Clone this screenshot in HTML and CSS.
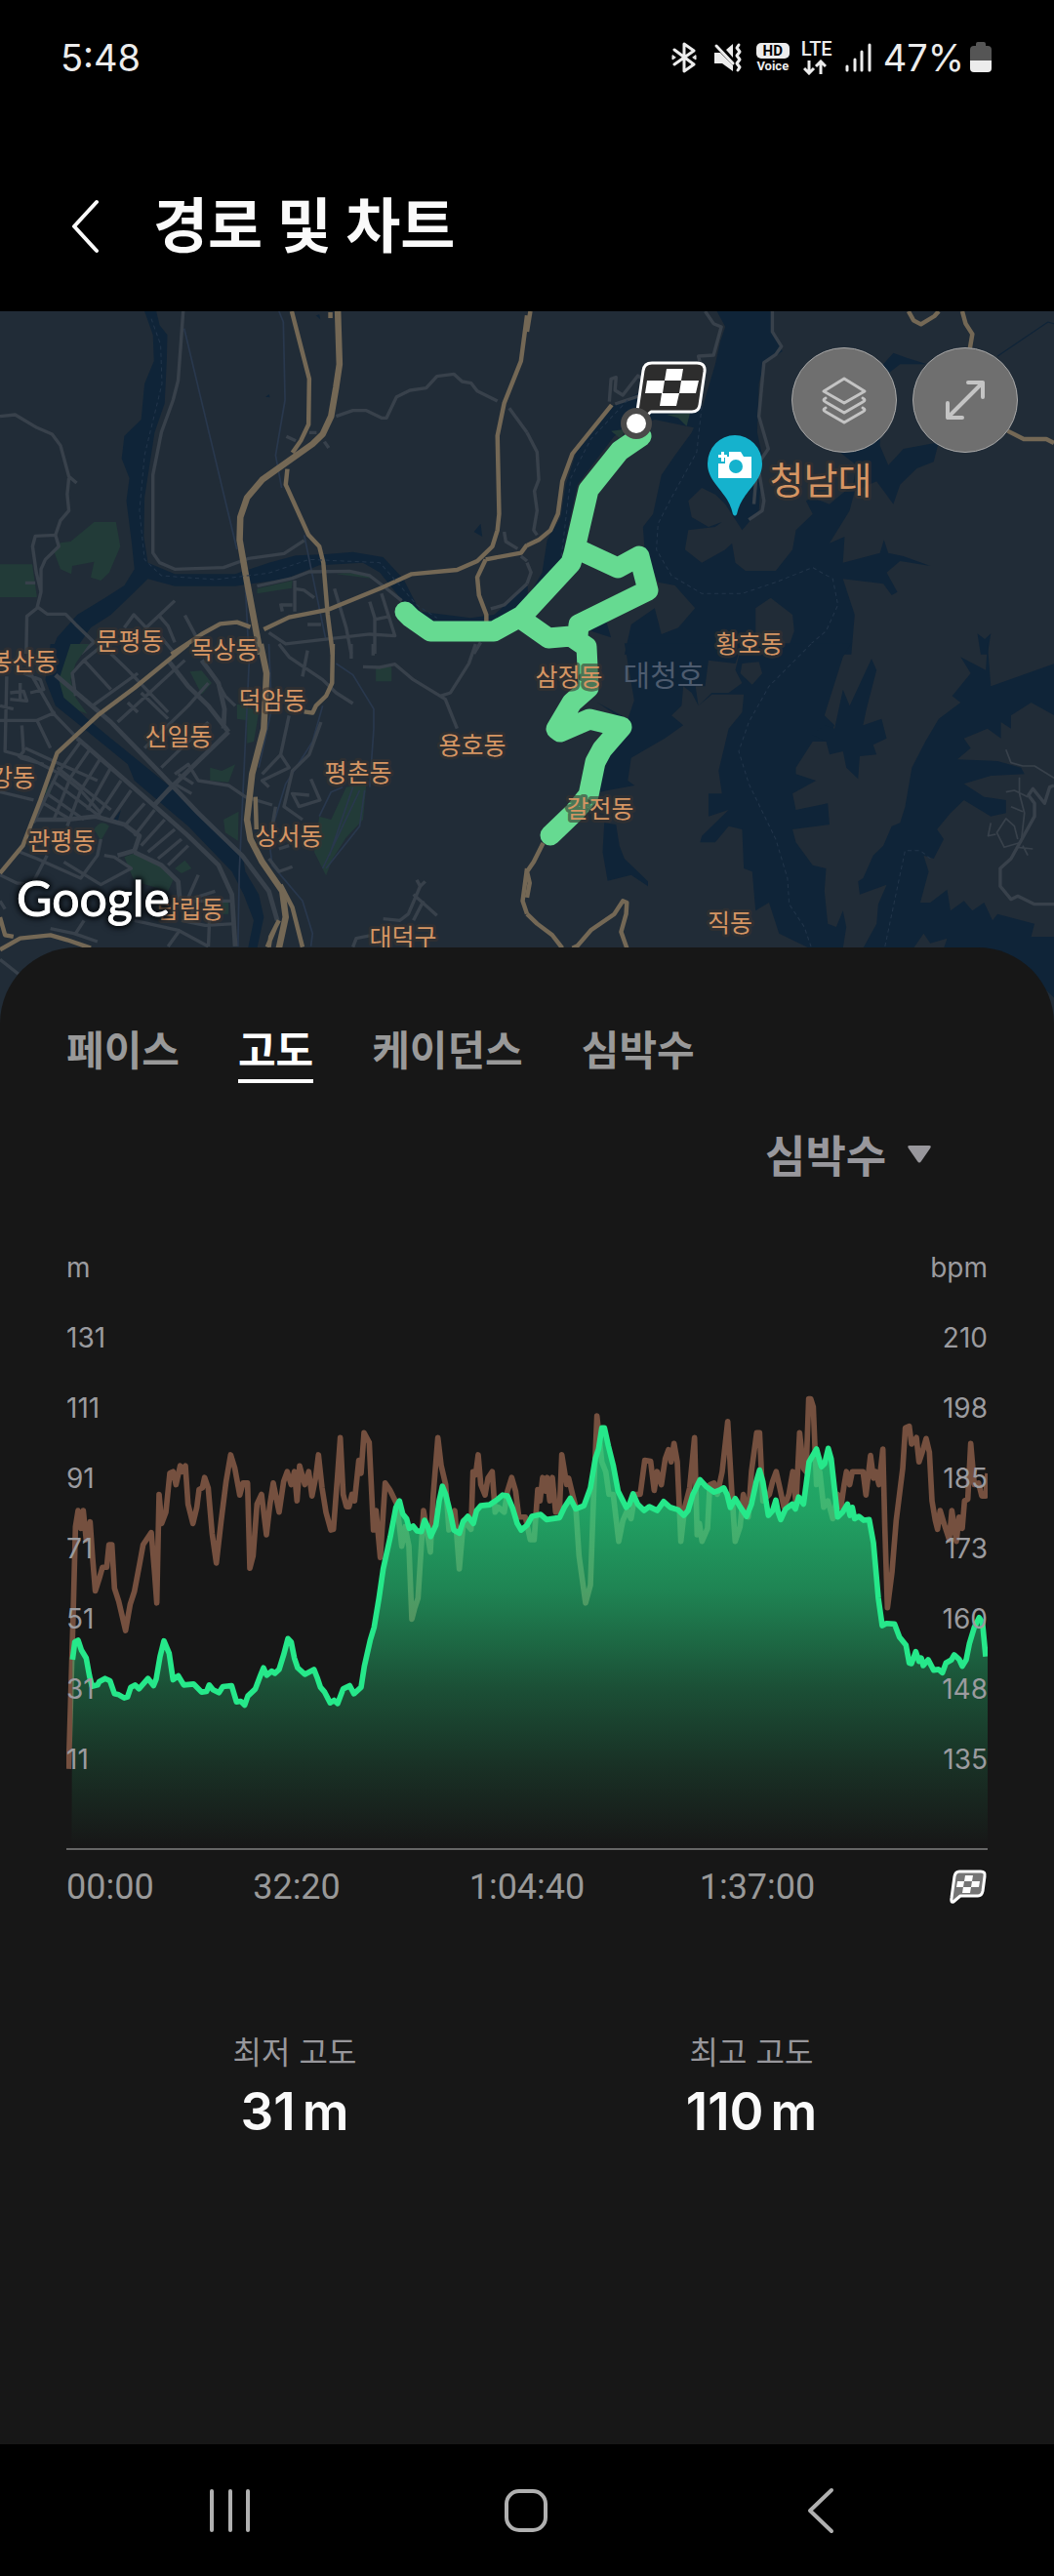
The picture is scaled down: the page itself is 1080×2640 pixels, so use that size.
FILE: index.html
```html
<!doctype html>
<html lang="ko">

<head>
	<meta charset="utf-8">
	<meta name="viewport" content="width=device-width">
	<title>경로 및 차트</title>
	<link rel="stylesheet" href="styles.css">
</head>

<body>
	<div class="status">
		<span class="clock">5:48</span>
		<div class="status-icons">
			<!-- bluetooth -->
			<svg width="28" height="32" viewBox="0 0 28 32" fill="none" stroke="#ececec" stroke-width="3" stroke-linejoin="round" stroke-linecap="round">
				<path d="M4 8l20 15-10 7V2l10 7L4 23" />
				<path d="M2 14v4l3-2zM26 14v4l-3-2z" stroke-width="1" fill="#ececec" />
			</svg>
			<!-- mute + vibrate -->
			<svg width="30" height="32" viewBox="0 0 30 32">
				<path d="M1 11h6l13 13v6L9 22H1zM20 2v14l-7-8z" fill="#ececec" />
				<path d="M3 4l17 18M26 3l-2 3 3 4-3 4 3 4-3 4 3 4-2 3" fill="none" stroke="#ececec" stroke-width="3" stroke-linecap="round" stroke-linejoin="round" />
			</svg>
			<span class="volte"><b>HD</b><i>Voice</i></span>
			<span class="lte">LTE
				<svg width="24" height="16" viewBox="0 0 24 16" fill="none" stroke="#ececec" stroke-width="3">
					<path d="M6 1v13M1 9l5 5 5-5M18 15V2M13 7l5-5 5 5" />
				</svg>
			</span>
			<svg width="28" height="32" viewBox="0 0 28 32" stroke="#ececec" stroke-width="3" stroke-linecap="round">
				<path d="M3 25v4M11 18v11M18 10v19M26 3v26" />
			</svg>
			<span class="battery-text">47%</span>
			<svg width="22" height="32" viewBox="0 0 22 32">
				<path d="M6 4V2q0-2 2-2h6q2 0 2 2v2h2q4 0 4 4v11H0V8q0-4 4-4z" fill="#555" />
				<path d="M0 19h22v8q0 4-4 4H4q-4 0-4-4z" fill="#ececec" />
			</svg>
		</div>
	</div>

	<header class="header">
		<button class="back" aria-label="뒤로">
			<svg width="52" height="60" viewBox="0 0 52 60" fill="none" stroke="#fafafa" stroke-width="4" stroke-linecap="round" stroke-linejoin="round">
				<path d="M38 5L15 30l23 25" />
			</svg>
		</button>
		<h1>경로 및 차트</h1>
	</header>

	<section class="map">
		<svg class="map-canvas" viewBox="0 319 1080 731" preserveAspectRatio="xMidYMin slice">
			<rect y="319" width="1080" height="731" fill="#212c37" />

			<!-- north west tile -->
			<g transform="translate(0 310) scale(.3444 .3333)">
				<path class="water" d="M430 27L465 27 475 70 498 100 496 180 490 310 460 400 448 480 430 600 428 720 440 800 520 835 700 835 800 800 880 778 960 775 1050 767 1140 783 1200 850 1250 950 1400 970 1470 960 1570 870 1570 1000 1280 990 1200 920 1130 830 1080 800 950 808 850 850 700 872 520 872 440 850 400 890 330 960 270 1000 215 1082 150 1082 170 1030 230 960 310 910 370 870 400 820 392 740 376 610 385 540 362 480 370 410 420 360 430 250 458 180 455 100ZM1410 705l20-25 5 40zM940 40l10-3 3 15zM790 290l10-8 3 10z" />
				<path class="park" d="M0 805H96L110 906H0ZM170 740L210 735 280 675H345L358 750 325 830 300 855 270 845 280 797 215 810 212 835 180 820 162 770ZM765 880L870 855 868 878 765 895ZM1000 835q70-10 115 15z" />
				<path class="rail" d="M548 80L705 760M830 27L843 60 848 300 820 470 838 570M905 715L970 1040M730 870L740 1080" />
				<path class="road" d="M0 350L45 345 110 385 155 405 180 440 205 535 228 555M205 540L200 590 205 640 180 670 165 715 105 718 97 750 108 830 122 890 110 940 80 965 78 1080M165 715L175 750 135 790 122 820 122 890M110 935L140 958H195L225 990 280 1045 240 1080M75 862H105" />
				<path class="road" d="M545 27L540 100 530 240 515 300 480 400 455 530V770L475 800 520 820 665 815 740 787 845 772 905 732M1000 350L1050 332H1090L1135 355H1150L1180 290 1220 270 1268 263 1300 227 1350 220 1375 243 1402 248 1420 272 1480 303M1515 325L1568 400M765 872L870 848 920 828 1040 826 1100 840 1150 880 1195 917M877 855V950M877 880L905 885 935 908M835 930H870M840 950L835 925" />
				<path class="road" d="M370 1000L398 960 435 1000 520 917M475 965L500 995 520 1045M550 962L590 1040M995 880L1030 1000 1045 1080M1135 895L1175 1025 1100 1020 850 1050 800 1015M1100 920L1115 970V1080M915 990H955M1115 975L1160 965M520 1080L480 1030M1500 705L1505 735 1540 757M1568 795L1550 780M1568 865L1500 930 1460 942M852 412L880 425M920 400H942M965 428L978 447M1410 1080L1430 1045" />
				<path class="highway wide" d="M1005 27L1010 190 1000 260 985 350 960 405 930 435 780 545 735 600 715 660 713 730 735 860 775 1082" />
				<path class="highway" d="M868 27L920 235 918 375 895 425 870 462M855 512L850 560 918 715 950 750 962 800 975 960 990 1082M1568 40L1550 180 1500 310 1480 410 1485 650 1480 700 1465 750 1420 795 1360 822 1225 835 1140 875 975 945 860 968 785 1005M745 998L705 983 655 988 600 1020 510 1082M1445 790L1420 845 1425 900 1447 960V985M1445 790L1550 770 1568 745M983 30v18" />
				<path class="ferry" d="M450 50L478 130 482 250 430 470 415 640 430 790 480 840 640 852 800 832 920 790 1020 795 1130 800 1240 930 1300 970" />
			</g>

			<!-- north east tile -->
			<g transform="translate(540 310) scale(.3444 .3333)">
				<path class="water" d="M565 27L590 75 575 120 560 190 520 330 490 400 440 470 400 530 375 650 345 690 350 760 390 860 440 870 500 940 450 1000 400 1020 380 940 310 990 290 1082 965 1082 975 960 940 850 1060 865 1085 900 1102 890 1070 830 1110 795 1200 810 1120 780 1075 770 1062 730 1050 770 940 800 945 720 900 740 960 640 975 580 1040 550 1090 620 1110 560 1160 510 1210 490 1225 430 1120 450 1075 500 1050 440 1060 230 1110 190 1190 190 1130 170 1090 155 1060 190 1040 300 1030 430 930 460 980 500 970 560 900 620 850 600 830 610 850 650 800 700 790 760 740 825 650 825 620 800 610 740 590 760 520 800 470 760 480 700 560 690 580 675 540 690 490 660 480 610 520 570 560 590 590 620 640 700 690 640 700 470 685 400 690 250 705 190 760 150 735 100 725 27ZM330 280L250 320 150 450 115 560 100 660 60 730 45 830 0 910V970L100 800 150 560 260 410 380 360 520 390V290ZM230 960L250 1030 190 1010zM1340 1018L1362 1035 1380 1018 1370 1082H1350Z" />
				<path d="M680 940L725 908 790 960 795 1010 770 1082H680Z" fill="#212c37" />
				<path class="park" d="M415 345L485 340 475 380 450 355ZM250 395L290 390 280 420Z" />
				<path class="road" d="M530 27L555 65 578 75 555 162 510 165 515 185M730 27V90L757 135 740 160 705 185 690 350 718 450 685 500 675 620M690 520L705 610 700 640 660 668M245 305L250 235 265 230 262 270 285 285 330 225 350 240M262 312L370 275M0 400L30 460 35 545 22 580 30 640 20 700 30 715M0 800L12 830 0 865" />
				<path class="highway" d="M252 315L135 465 105 550 92 650 70 700 35 730 0 747M1135 27L1150 55 1172 67 1212 42 1225 27M1295 27L1305 65 1325 97 1318 140M1430 395L1478 420H1545L1568 432M0 90L10 27" />
				<path class="ferry" d="M520 320L505 460 430 600 390 680 385 760 430 840 520 895 640 895 740 860 850 815 910 850 925 930 890 1010 810 1080M300 300L190 420 130 540 100 800" />
				<path class="stream" d="M1400 165L1550 60 1568 65" />
			</g>

			<!-- south west tile -->
			<g transform="translate(0 660) scale(.3444 .3333)">
				<path class="water" d="M150 0H215L180 100 200 170 260 230 330 290 520 450 640 560 720 640 730 700 770 770 785 840 765 935H738L755 850 725 770 690 700 560 560 400 420 380 370 250 260 165 190 135 110ZM335 545L360 510 350 545z" />
				<path class="park" d="M210 0H265L225 60 210 110 225 165 260 215 235 205 190 165 175 110ZM565 85L600 82 630 120 600 155ZM1118 70H1165V115H1118ZM705 185L730 190 770 210 755 300 735 305 735 235 705 230ZM625 380L660 390 700 370 680 425 625 420ZM665 540L710 515 708 605 670 580ZM370 655L410 640 480 680 520 715 500 760 400 730ZM520 690L550 665 570 690 540 705ZM280 570Q300 535 325 560L300 605ZM660 785H680V830H660ZM1030 440L1090 430 1080 540 1030 595 990 660 970 712 935 640 950 530 985 540ZM130 460L160 415 150 460Z" />
				<path class="rail" d="M742 40L730 300 712 700 708 930M800 0L808 200 770 380M960 190L930 300 850 430 800 600 810 680 900 790 930 890 925 930M1000 60L1050 95 1112 200V260L1100 440M1070 450L960 690M1085 450L1070 560 970 690M1050 440L980 650M1020 440L985 455 950 530" />
				<path class="road wide" d="M165 95L330 240 480 400 590 520 720 650 800 760 825 850M230 290L330 380 440 480 560 590 650 680 690 770 700 930M680 270L500 450 455 500M500 50L560 130 620 190 680 270M600 50L650 120 668 200 665 260M100 540H200L285 530 370 555 415 590 400 635 350 650M400 640L480 680 530 730 535 790" />
				<path class="road" d="M20 100L15 330 85 350 180 400 240 450 300 520M0 235H110L165 210M70 90L120 110 130 140 90 150M30 150L70 145 80 175 30 170M60 120V175M65 250L70 330 55 350M110 235L150 320M0 190L40 200M85 80L160 215 230 290M75 320L180 370 290 420M60 350L130 370M250 50L330 140M330 30L380 80 500 210M225 160L215 90 250 50 310 0M275 190L410 90M350 240L550 50M380 180L410 210M420 150L500 230M430 320L560 190 620 120M480 380L620 240M520 400L560 370 590 420 680 435 730 470 810 495" />
				<path class="road" d="M520 430L570 460M530 400L575 430M240 300L170 400 100 550M270 320L210 410 160 540M300 350L240 450 200 560M330 380L260 510M360 420L290 530M390 450L330 540M430 490L370 560M460 510L400 590M490 540L420 620M520 570L440 640M540 600L470 660M560 620L500 680M170 380L330 510M155 420L310 540M140 460L250 540M130 490L210 540M300 600L290 650 240 720 110 660 60 640M140 650L100 730M190 670L300 740 390 690 340 655 310 650M530 790H690M540 850L610 865 700 860M575 790L570 850M625 800L620 930M535 880L500 930M590 710L560 780M640 760L580 780M400 850L530 880 620 930M150 875L220 890 290 915M250 850L225 890M0 710L50 735 100 740M0 790L15 815M0 455L100 480M0 970L55 1015" />
				<path class="road" d="M640 105L670 160 700 190M830 0L860 40 960 110 1000 150 1050 183M915 20L900 100M1045 0V45M1110 0V35M1080 70L1130 72 1175 62 1230 110 1310 160 1325 170 1360 260M1310 160L1340 150 1395 60 1415 0M955 240L920 340 870 390 845 500 900 540M860 220L835 340 780 400M835 340L860 380 780 420 800 440M925 415L952 480 890 500 870 460 920 465M820 500L810 560M830 630L860 620M800 660L830 700 870 685M1240 725L1250 745 1265 730M1250 745L1215 830 1190 850 1140 845M1230 770L1300 835M1260 790L1230 850M1100 897L1060 905 1050 932" />
				<path class="highway wide" d="M775 0L793 90 785 260 750 400 735 540 745 600 780 670 840 760 850 840 830 935" />
				<path class="highway" d="M560 0L515 38 400 135 290 220 170 335 120 480 90 560 68 620 0 705M990 0L988 120 970 160 940 190 930 212 905 208M760 470L763 570M835 740L870 810 900 932M830 850L805 900 800 932M820 870L795 932M0 840L15 895 40 900M0 940L60 905 150 895 200 910 270 935M1568 690L1555 790 1568 830" />
			</g>

			<!-- south east tile -->
			<g transform="translate(540 660) scale(.3444 .3333)">
				<path class="water" d="M210 180L300 230 320 170 330 100 380 60 500 20 530 80 500 120 510 190 550 150 600 150 640 120 620 80 640 -2 965 -2 940 40 885 220 915 250 890 300 850 300 800 380 800 400 860 420 790 460 800 510 895 490 900 555 790 570 800 610 850 680 890 690 885 760 895 860 920 870 940 820 950 870 940 935 840 935 750 890 720 795 680 820 670 700 645 690 640 570 600 560 560 610 515 610 520 590 600 510 540 530 540 460 580 460 570 390 600 260 640 210 645 155 550 155 510 190 490 150 465 130 460 190 430 220 465 250 410 290 310 350 300 420 320 435 240 450 200 460 250 330 310 250ZM290 -2H640L620 60 540 50 530 130 465 130 430 200 320 180ZM230 550L265 555 275 620 290 660 360 730V745L310 710 240 728 225 640Z" />
				<path class="water" d="M1025 45L1040 80 1010 200 1000 250 1055 230 1070 290 1030 310 1040 340 990 345 985 415 950 380 940 330 900 340 890 300 850 280 885 250 915 260 940 140 960 190Z" />
				<path class="water" d="M1370 -2L1365 80 1290 40 1320 90 1265 160 1290 180 1225 230 1185 300 1145 380 1125 500 1110 550 1085 560 1060 620 1030 650 1000 720 985 730 990 770 1070 740 1045 800 1040 860 1000 935 1150 935 1180 890 1200 920 1250 905 1240 935 1360 935 1440 980 1500 1020 1570 1090V900L1500 900 1510 860 1400 830 1385 850 1360 795 1325 820 1300 790 1260 820 1250 755 1200 795 1170 795 1195 700 1180 650 1210 660 1240 600 1220 570 1260 520 1300 480 1380 530 1425 520V480L1360 470 1300 430 1380 405 1480 400 1470 380 1400 360 1280 355 1320 320 1300 290 1370 260 1410 290V240L1440 260V220L1500 180 1570 220V60L1380 130Z" />
				<path d="M640 60L690 55 700 90 670 125 635 90Z" fill="#212c37" />
				<path class="road" d="M1568 435L1555 440 1540 490 1505 445 1492 465 1510 490V530L1440 660 1408 690V745L1440 785 1460 775 1510 800H1568" />
				<path class="road thin" d="M1425 325L1440 365 1475 375H1510L1568 412M1465 410V460L1480 520 1470 610 1420 625 1398 580 1425 537 1450 560 1460 600M1425 455L1450 450 1490 470M1440 500L1475 515M1380 550L1372 590 1395 585M1460 625L1505 630M1475 620L1490 650" />
				<path class="highway" d="M48 612L20 670 0 700 8 735 0 780M0 830L30 860 75 895 105 935M135 935L150 928 190 880 260 830 285 790 297 795 295 830 280 885 297 935" />
				<path class="ferry" d="M845 0L720 130 660 240 630 330 660 430 740 600 775 720 780 800 825 870 845 930M1065 930L1125 635 1170 635 1200 660" />
			</g>

			<!-- recorded route -->
			<path class="route" d="M654 443L657 447 635 462 603 502 588 567 585 577 535 631 506 647H441L421 633 415 627M535 635L562 654 585 652 601 663 603 705 586 720 570 747 574 750 604 737 637 745 617 768 610 781 603 815 589 832 564 856M590 562L633 582 655 570 664 605 593 640 592 652" />

			<g class="places">
				<text x="24" y="687">봉산동</text>
				<text x="133" y="666">문평동</text>
				<text x="230" y="675">목상동</text>
				<text x="279" y="727">덕암동</text>
				<text x="183" y="764">신일동</text>
				<text x="484" y="773">용호동</text>
				<text x="13" y="806">강동</text>
				<text x="367" y="801">평촌동</text>
				<text x="63" y="871">관평동</text>
				<text x="296" y="866">상서동</text>
				<text x="195" y="941">탑립동</text>
				<text x="413" y="970">대덕구</text>
				<text x="768" y="669">황호동</text>
				<text x="583" y="703">삼정동</text>
				<text x="615" y="838">갈전동</text>
				<text x="748" y="955">직동</text>
				<text class="lake" x="680" y="703">대청호</text>
				<text class="sight" x="841" y="506">청남대</text>
			</g>

			<!-- photo spot pin -->
			<path d="M753 446a28 29 0 0 1 28 29c0 21-21 28-26 52q-2 3-4 0c-5-24-26-31-26-52a28 29 0 0 1 28-29z" fill="#15b2cd" />
			<path d="M747 463h12l3 5h8v22h-34v-15h7v-7h4zM739 463h3v3h3v3h-3v4h-3v-4h-3v-3h3z" fill="#fff" />
			<circle cx="754" cy="478" r="7" fill="#15b2cd" />

			<!-- finish flag -->
			<path d="M668 372h46q9 0 8 9l-5 34q-1 7-8 7h-42l-9 8-5-9 6-41q1-8 9-8z" fill="#2d2d2d" stroke="#fff" stroke-width="3" stroke-linejoin="round" />
			<path d="M683 378h17l-2 12h-17zM663 390h18l-2 13h-18zM698 390h18l-3 13h-17zM678 403h18l-3 13h-17z" fill="#fff" />
			<circle cx="652" cy="434" r="13" fill="#fff" stroke="#4a4a4a" stroke-width="6" />

			<text class="google" x="17" y="939">Google</text>
		</svg>

		<div class="map-tools">
			<button aria-label="지도 유형">
				<svg width="48" height="50" viewBox="0 0 48 50" fill="none" stroke="#c4c4c4" stroke-width="3" stroke-linejoin="round" stroke-linecap="round">
					<path d="M24 3l21 13-21 12L3 16zM5 23q-4 2 0 4l19 11 19-11q4-2 0-4M5 33q-4 2 0 4l19 11 19-11q4-2 0-4" />
				</svg>
			</button>
			<button aria-label="전체 화면">
				<svg width="42" height="42" viewBox="0 0 42 42" fill="none" stroke="#c4c4c4" stroke-width="4" stroke-linejoin="round" stroke-linecap="round">
					<path d="M24 3h15v15M39 3L3 39M3 24v15h15" />
				</svg>
			</button>
		</div>
	</section>

	<main class="sheet">
		<nav class="tabs">
			<button>페이스</button>
			<button class="active">고도</button>
			<button>케이던스</button>
			<button>심박수</button>
		</nav>

		<div class="compare">
			<select aria-label="비교 항목">
				<option>심박수</option>
			</select>
			<svg width="26" height="26" viewBox="0 0 26 26"><path d="M3 1h20q3 0 1 3l-9 13q-2 3-4 0L2 4q-2-3 1-3z" fill="#98979c" /></svg>
		</div>

		<div class="plot">
			<svg class="plot-lines" viewBox="84 -408 2832 1899" preserveAspectRatio="none">
				<defs>
					<linearGradient id="fade" gradientUnits="userSpaceOnUse" x1="0" y1="195" x2="0" y2="1488">
						<stop offset="0" stop-color="#26e88a" stop-opacity=".74" />
						<stop offset=".2" stop-color="#26e88a" stop-opacity=".66" />
						<stop offset=".39" stop-color="#26e88a" stop-opacity=".52" />
						<stop offset=".62" stop-color="#26e88a" stop-opacity=".27" />
						<stop offset=".81" stop-color="#26e88a" stop-opacity=".12" />
						<stop offset="1" stop-color="#26e88a" stop-opacity="0" />
					</linearGradient>
				</defs>
				<polyline class="heart" points="91,1247 105,770 112,500 120,450 128,505 136,450 145,540 157,485 165,600 173,698 185,660 195,625 208,625 215,555 224,555 232,690 245,730 266,820 280,740 293,700 310,610 320,555 345,518 355,640 362,735 369,400 377,490 390,455 402,335 412,330 421,370 434,312 440,330 450,312 458,430 473,490 485,440 492,385 502,380 509,348 520,380 532,520 545,612 560,480 575,360 589,278 602,320 617,402 627,365 641,365 648,628 658,590 670,430 684,400 699,525 710,430 720,365 738,455 752,360 763,330 775,370 785,330 793,420 801,312 817,370 829,330 839,405 850,350 859,278 870,380 882,455 897,510 905,508 917,350 926,225 935,400 945,438 953,438 962,400 970,420 983,295 990,335 999,210 1015,240 1028,510 1036,450 1049,595 1064,365 1078,385 1100,430 1115,560 1125,500 1137,560 1146,785 1155,750 1165,720 1182,450 1203,578 1212,400 1226,225 1236,310 1250,370 1260,510 1278,450 1292,630 1305,480 1328,508 1334,330 1342,340 1350,278 1358,370 1371,402 1380,350 1393,330 1402,455 1412,440 1430,455 1440,390 1453,348 1465,390 1475,470 1495,470 1510,540 1522,540 1533,385 1540,420 1548,348 1557,390 1562,348 1570,420 1578,348 1588,455 1600,450 1607,278 1622,370 1628,350 1640,400 1650,440 1660,590 1680,735 1695,680 1705,400 1715,158 1730,300 1742,330 1752,400 1765,400 1782,545 1795,480 1808,450 1820,475 1832,400 1848,400 1862,295 1880,298 1891,388 1900,330 1913,370 1925,290 1935,262 1943,300 1952,243 1962,300 1973,545 1985,440 2000,380 2015,225 2023,525 2030,490 2038,545 2055,505 2062,370 2075,365 2085,400 2100,330 2117,175 2130,400 2140,545 2155,500 2165,400 2180,470 2190,330 2206,210 2215,210 2225,420 2245,400 2255,360 2266,330 2275,370 2290,440 2305,400 2317,330 2327,430 2338,210 2350,320 2358,330 2366,105 2372,105 2380,130 2390,370 2400,330 2412,440 2425,420 2440,475 2455,400 2465,440 2475,370 2482,330 2492,370 2500,330 2533,330 2542,402 2556,280 2565,350 2572,330 2582,370 2594,260 2600,500 2608,750 2622,640 2635,480 2655,320 2663,195 2675,190 2682,245 2697,225 2705,300 2715,270 2727,228 2737,270 2745,420 2755,480 2762,508 2770,450 2785,500 2798,540 2806,450 2820,545 2828,470 2838,505 2845,420 2855,415 2864,243 2875,370 2888,365 2898,405 2910,405 2916,335" />
				<path fill="url(#fade)" d="M100 1488L103 910 110 855 120 850 130 880 145 905 155 960 163 992 203 968 218 975 232 1015 262 1028 282 995 307 1000 335 968 352 990 372 900 384 852 400 890 412 972 428 960 445 988 475 985 500 1010 523 988 553 1012 565 993 592 990 607 1040 632 1050 642 1022 665 1000 690 935 700 958 738 940 765 845 775 855 795 935 817 955 845 940 865 995 895 1043 918 1045 935 1000 955 990 968 1015 990 995 1000 930 1018 850 1030 810 1058 630 1080 530 1097 440 1108 420 1118 460 1138 505 1175 515 1185 480 1204 530 1220 495 1240 375 1265 460 1275 510 1292 520 1303 485 1318 468 1335 490 1345 450 1358 435 1385 432 1425 402 1440 405 1455 440 1470 490 1482 510 1500 495 1515 468 1542 462 1560 478 1600 472 1633 412 1650 445 1675 435 1695 380 1710 290 1730 195 1738 195 1765 310 1780 390 1805 440 1826 398 1840 430 1860 450 1876 438 1900 450 1920 422 1965 448 1982 465 1995 450 2010 400 2032 355 2050 375 2075 393 2105 380 2125 440 2140 413 2175 468 2190 430 2215 325 2225 360 2242 465 2265 418 2280 478 2295 445 2335 408 2350 430 2367 300 2390 260 2405 315 2426 258 2435 290 2455 470 2485 430 2507 475 2552 478 2565 550 2580 720 2592 805 2630 800 2665 865 2675 920 2695 885 2718 928 2733 910 2750 942 2777 950 2788 920 2813 895 2838 930 2850 910 2860 860 2890 780 2900 795 2916 900V1488Z" />
				<polyline class="altitude" points="103,910 110,855 120,850 130,880 145,905 155,960 163,992 180,988 185,978 203,968 218,975 232,1015 245,1018 262,1028 272,1025 282,995 295,988 307,1000 320,985 335,968 352,990 360,970 372,900 384,852 400,890 412,972 428,960 445,988 475,985 500,1010 515,1008 523,988 535,1003 553,1012 565,993 592,990 607,1040 620,1038 632,1050 642,1022 665,1000 680,960 690,935 700,958 715,945 725,952 738,940 752,895 765,845 775,855 785,905 795,935 817,955 845,940 855,965 865,995 878,1010 895,1043 907,1035 918,1045 935,1000 955,990 968,1015 990,995 1000,930 1018,850 1030,810 1045,720 1058,630 1080,530 1097,440 1108,420 1118,460 1130,475 1138,505 1150,498 1162,513 1175,515 1185,480 1195,500 1204,530 1220,495 1230,420 1240,375 1250,400 1265,460 1275,510 1292,520 1303,485 1318,468 1335,490 1345,450 1358,435 1385,432 1410,415 1425,402 1440,405 1455,440 1470,490 1482,510 1500,495 1515,468 1542,462 1560,478 1600,472 1615,440 1633,412 1650,445 1675,435 1695,380 1710,290 1720,260 1730,195 1738,195 1750,250 1765,310 1780,390 1805,440 1815,430 1826,398 1840,430 1860,450 1876,438 1900,450 1920,422 1940,440 1965,448 1982,465 1995,450 2010,400 2032,355 2050,375 2075,393 2090,388 2105,380 2115,400 2125,440 2140,413 2155,438 2175,468 2190,430 2205,360 2215,325 2225,360 2242,465 2255,450 2265,418 2272,455 2280,478 2295,445 2315,430 2325,445 2335,408 2350,430 2358,370 2367,300 2390,260 2405,315 2415,305 2426,258 2435,290 2455,470 2470,455 2485,430 2493,465 2500,440 2507,475 2520,468 2535,480 2552,478 2565,550 2580,720 2592,805 2605,798 2630,800 2645,840 2665,865 2675,920 2682,922 2695,885 2705,915 2712,905 2718,928 2733,910 2750,942 2765,940 2777,950 2788,920 2805,910 2813,895 2828,908 2838,930 2850,910 2860,860 2875,810 2890,780 2900,795 2910,900" />
			</svg>
			<div class="axis">
				<span>m</span><span>131</span><span>111</span><span>91</span><span>71</span><span>51</span><span>31</span><span>11</span>
			</div>
			<div class="axis right">
				<span>bpm</span><span>210</span><span>198</span><span>185</span><span>173</span><span>160</span><span>148</span><span>135</span>
			</div>
		</div>

		<div class="times">
			<span>00:00</span>
			<span>32:20</span>
			<span>1:04:40</span>
			<span>1:37:00</span>
			<svg width="40" height="36" viewBox="0 0 40 36">
				<path d="M11 2h22q5 0 4 5l-2 15q-1 5-5 5H12l-7 6q-3 1-2-4L6 7q1-5 5-5z" fill="#757575" stroke="#fff" stroke-width="3" stroke-linejoin="round" />
				<path d="M17 6h8l-1 6h-8zM9 12h7l-1 6H8zM24 12h8l-1 6h-8zM15 18h8l-1 6h-8z" fill="#fff" />
			</svg>
		</div>

		<dl class="stats">
			<div>
				<dt>최저 고도</dt>
				<dd>31<span>m</span></dd>
			</div>
			<div>
				<dt>최고 고도</dt>
				<dd>110<span>m</span></dd>
			</div>
		</dl>
	</main>

	<footer class="navbar">
		<button aria-label="최근 앱">
			<svg width="48" height="48" viewBox="0 0 48 48" stroke="#b0b0b0" stroke-width="4" stroke-linecap="round"><path d="M5 4v40M24 4v40M42 4v40" /></svg>
		</button>
		<button aria-label="홈">
			<svg width="48" height="48" viewBox="0 0 48 48" fill="none" stroke="#b0b0b0" stroke-width="4"><rect x="4" y="4" width="40" height="40" rx="13" /></svg>
		</button>
		<button aria-label="뒤로">
			<svg width="48" height="48" viewBox="0 0 48 48" fill="none" stroke="#b0b0b0" stroke-width="4" stroke-linecap="round" stroke-linejoin="round"><path d="M34 3L12 24l22 21" /></svg>
		</button>
	</footer>
</body>

</html>
```

FILE: styles.css
```css
* {
	box-sizing: border-box;
}

body {
	margin: 0;
	min-height: 100vh;
	display: flex;
	flex-direction: column;
	background: #000;
	color: #fafafa;
	font-family: Inter, "Noto Sans CJK KR", sans-serif;
}

button {
	padding: 0;
	border: 0;
	background: none;
	color: inherit;
	font: inherit;
	cursor: pointer;
}

svg {
	display: block;
}

/* status bar */
.status {
	display: flex;
	justify-content: space-between;
	align-items: center;
	height: 118px;
	padding: 0 64px 0 62px;
	font-size: 38px;
	color: #ececec;
}

.status-icons {
	display: flex;
	align-items: center;
	gap: 12px;
}

.status-icons svg:first-child {
	margin-right: 4px;
}

.battery-text {
	margin-right: -6px;
}

.volte {
	display: flex;
	flex-direction: column;
	align-items: center;
	gap: 1px;
	margin-left: 2px;
	font-family: Roboto, sans-serif;
}

.volte b {
	width: 34px;
	border-radius: 5px;
	background: #ececec;
	color: #000;
	font-size: 15px;
	line-height: 16px;
	text-align: center;
}

.volte i {
	font-size: 13px;
	font-style: normal;
	font-weight: 700;
	line-height: 14px;
}

.lte {
	display: flex;
	flex-direction: column;
	align-items: center;
	gap: 2px;
	font-family: Roboto, sans-serif;
	font-size: 20px;
	font-weight: 500;
	line-height: 17px;
}

/* title */
.header {
	display: flex;
	align-items: center;
	gap: 44px;
	height: 201px;
	padding: 27px 62px 0 61px;
}

.header h1 {
	margin: 0;
	font-size: 61px;
	font-weight: 700;
	line-height: 80px;
}

/* map */
.map {
	position: relative;
}

.map-canvas {
	width: 100%;
	height: auto;
}

.water {
	fill: #0f2438;
}

.park {
	fill: #223b38;
}

.road,
.highway,
.rail,
.ferry,
.stream {
	fill: none;
	stroke: #38414b;
	stroke-width: 10;
	stroke-linejoin: round;
}

.road.wide {
	stroke-width: 14;
}

.road.thin {
	stroke-width: 5;
}

.highway {
	stroke: #746855;
	stroke-width: 13;
}

.highway.wide {
	stroke-width: 19;
}

.rail {
	stroke: #29384d;
	stroke-width: 5;
}

.ferry {
	stroke: #22354a;
	stroke-width: 3;
	stroke-dasharray: 12 10;
}

.stream {
	stroke: #0f2438;
	stroke-width: 3;
}

.route {
	fill: none;
	stroke: #66da91;
	stroke-width: 21;
	stroke-linejoin: round;
	stroke-linecap: round;
}

.places {
	fill: #d59563;
	stroke: #37322f;
	stroke-width: 6;
	stroke-linejoin: round;
	stroke-opacity: .6;
	paint-order: stroke;
	font-size: 25px;
	text-anchor: middle;
}

.places .sight {
	font-size: 38px;
}

.places .lake {
	fill: #4d5b6e;
	stroke: none;
	font-size: 30px;
}

.google {
	fill: #fff;
	stroke: #fff;
	stroke-width: 1;
	filter: drop-shadow(0 0 2px #0c1116) drop-shadow(0 0 2px #0c1116) drop-shadow(0 0 2px #0c1116);
	font-family: Lato, sans-serif;
	font-size: 50px;
}

.map-tools {
	position: absolute;
	top: 37px;
	right: 37px;
	display: flex;
	gap: 16px;
}

.map-tools button {
	display: grid;
	place-items: center;
	width: 108px;
	height: 108px;
	border: 1px solid #a8a8a8;
	border-radius: 50%;
	background: #6f6f6f;
}

/* bottom sheet */
.sheet {
	position: relative;
	flex: 1;
	margin-top: -79px;
	padding: 77px 68px 0;
	border-radius: 78px 78px 0 0;
	background: #171717;
}

.tabs {
	display: flex;
	gap: 60px;
}

.tabs button {
	border-bottom: 4px solid transparent;
	color: #999;
	font-size: 42px;
	font-weight: 700;
	line-height: 58px;
}

.tabs .active {
	border-color: #fff;
	color: #fff;
}

.compare {
	display: flex;
	justify-content: flex-end;
	align-items: center;
	gap: 20px;
	margin: 46px 0 47px;
	padding-right: 57px;
}

.compare select {
	appearance: none;
	height: 60px;
	padding: 0;
	border: 0;
	background: none;
	color: #98979c;
	font: inherit;
	font-size: 45px;
	font-weight: 700;
	line-height: 60px;
}

.plot {
	position: relative;
	display: flex;
	justify-content: space-between;
	padding-bottom: 55px;
	border-bottom: 2px solid #666;
}

.plot-lines {
	position: absolute;
	top: 0;
	left: 0;
	width: 100%;
	height: 100%;
}

.heart,
.altitude {
	fill: none;
	stroke: #75503f;
	stroke-width: 17;
	stroke-linejoin: round;
}

.altitude {
	stroke: #26e88a;
}

.axis {
	position: relative;
	display: flex;
	flex-direction: column;
	color: #9b9b9f;
	font-size: 28px;
	line-height: 72px;
}

.axis.right {
	text-align: right;
}

.times {
	display: grid;
	grid-template-columns: 1fr 2fr 2fr 2fr 1fr;
	align-items: center;
	margin-top: 14px;
	color: #999;
	font-family: Roboto, sans-serif;
	font-size: 36px;
	line-height: 48px;
	text-align: center;
}

.times span:first-child {
	text-align: left;
}

.times svg {
	justify-self: end;
}

.stats {
	display: grid;
	grid-template-columns: 1fr 1fr;
	margin: 124px 8px 0 0;
	text-align: center;
}

.stats dt {
	color: #98979c;
	font-size: 32px;
	line-height: 44px;
}

.stats dd {
	margin: 8px 0 0;
	font-size: 53px;
	font-weight: 600;
	line-height: 60px;
}

.stats dd span {
	margin-left: 7px;
}

/* system navigation */
.navbar {
	display: grid;
	grid-template-columns: repeat(3, 1fr);
	place-items: center;
	height: 135px;
	padding: 0 86px 0 84px;
}
```
